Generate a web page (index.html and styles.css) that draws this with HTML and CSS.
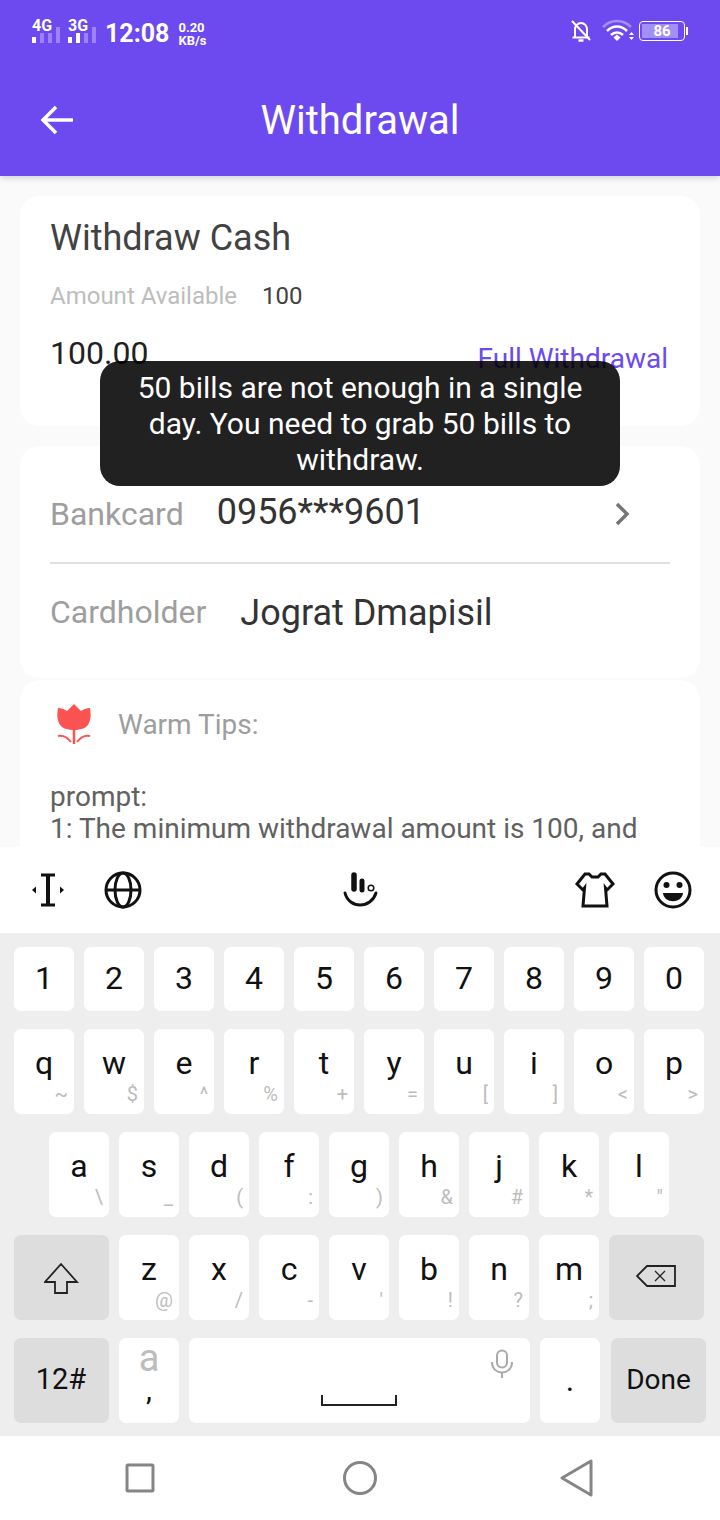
FILE: index.html
```html
<!DOCTYPE html>
<html lang="en">
<head>
  <meta charset="UTF-8">
  <meta name="viewport" content="width=device-width, initial-scale=1.0">
  <title>Withdrawal</title>
  <link rel="stylesheet" href="styles.css">
</head>
<body>
  <div class="screen">
    <header class="header">
      <div class="status-bar">
        <div class="status-left">
          <div class="signal">
            <span class="signal-label">4G</span>
            <div class="bars"><i class="on"></i><i></i><i></i><i></i></div>
          </div>
          <div class="signal">
            <span class="signal-label">3G</span>
            <div class="bars"><i class="on"></i><i class="on"></i><i></i><i></i></div>
          </div>
          <span class="clock">12:08</span>
          <div class="speed"><span>0.20</span><span>KB/s</span></div>
        </div>
        <div class="status-right">
          <svg class="icon-bell" width="22" height="24" viewBox="0 0 22 24" fill="none" stroke="#fff" stroke-width="2">
            <path d="M5 18V10.500C5 7 7.500 4 11 4C14.500 4 17 7 17 10.500V18"/>
            <path d="M2.500 18.500H19.500"/>
            <path d="M2 2L20 21"/>
            <path d="M8.500 21.500H13.500" stroke-width="2.500"/>
          </svg>
          <svg class="icon-wifi" width="36" height="24" viewBox="0 0 36 24" fill="none">
            <path d="M2 8C10 0 22 0 30 8" stroke="#a48ff6" stroke-width="2.500"/>
            <path d="M6 12C12 6 20 6 26 12" stroke="#fff" stroke-width="2.500"/>
            <path d="M10 16C13.500 12.500 18.500 12.500 22 16" stroke="#fff" stroke-width="2.500"/>
            <path d="M12.500 18.500L16 15.500L19.500 18.500L16 22Z" fill="#fff"/>
            <path d="M28 16L30.500 13L33 16ZM28 18H33L30.500 21Z" fill="#fff"/>
          </svg>
          <div class="battery">
            <div class="battery-body">
              <div class="battery-fill"></div>
              <span class="battery-level">86</span>
            </div>
            <div class="battery-tip"></div>
          </div>
        </div>
      </div>
      <div class="app-bar">
        <svg class="back" width="36" height="32" viewBox="0 0 36 32" fill="none" stroke="#fff" stroke-width="3.500">
          <path d="M34 16H4"/>
          <path d="M17 3L4 16L17 29"/>
        </svg>
        <h1>Withdrawal</h1>
      </div>
    </header>

    <main class="content">
      <section class="card card-cash">
        <h2>Withdraw Cash</h2>
        <div class="available">
          <span class="available-label">Amount Available</span>
          <span>100</span>
        </div>
        <div class="amount-row">
          <span class="amount">100.00</span>
          <span class="full-link">Full Withdrawal</span>
        </div>
      </section>

      <section class="card card-bank">
        <div class="bank-row bank-row-line">
          <span class="bank-label">Bankcard</span>
          <span class="bank-value">0956***9601</span>
          <svg class="chevron" width="16" height="24" viewBox="0 0 16 24" fill="none" stroke="#757575" stroke-width="3.500">
            <path d="M3 2L13 12L3 22"/>
          </svg>
        </div>
        <div class="bank-row">
          <span class="bank-label holder-label">Cardholder</span>
          <span class="bank-value holder">Jograt Dmapisil</span>
        </div>
      </section>

      <section class="card card-tips">
        <div class="tips-title">
          <svg width="36" height="42" viewBox="0 0 36 42" fill="none">
            <path d="M18 1L25 8C28 6 31 5 34 5C35 12 35 15 33 20C31 25 25 27 18 27C11 27 5 25 3 20C1 15 1 12 2 5C5 5 8 6 11 8Z" fill="#fb5252"/>
            <path d="M18 27V41" stroke="#fb5252" stroke-width="2.500"/>
            <path d="M2 33C7 32 12 35 15 39M34 33C29 32 24 35 21 39" stroke="#fb5252" stroke-width="2"/>
          </svg>
          <span>Warm Tips:</span>
        </div>
        <p>prompt:<br>1: The minimum withdrawal amount is 100, and</p>
      </section>

      <div class="toast">50 bills are not enough in a single day. You need to grab 50 bills to withdraw.</div>
    </main>

    <div class="kb-toolbar">
      <div class="kb-tools">
        <svg width="36" height="36" viewBox="0 0 36 36" fill="none" stroke="#111" stroke-width="3">
          <path d="M11 3H25M11 33H25" stroke-width="3"/>
          <path d="M18 3V33" stroke-width="4"/>
          <path d="M2 18L6 14.500V21.500ZM34 18L30 14.500V21.500Z" fill="#111" stroke="none"/>
        </svg>
        <svg width="38" height="38" viewBox="0 0 38 38" fill="none" stroke="#111" stroke-width="3">
          <circle cx="19" cy="19" r="17"/>
          <ellipse cx="19" cy="19" rx="8" ry="17"/>
          <path d="M2 19H36"/>
        </svg>
      </div>
      <svg class="kb-logo" width="36" height="36" viewBox="0 0 36 36" fill="none">
        <path d="M11 3V17" stroke="#111" stroke-width="5.500" stroke-linecap="round"/>
        <path d="M19 9V18" stroke="#111" stroke-width="5" stroke-linecap="round"/>
        <circle cx="28" cy="16" r="2.800" stroke="#111" stroke-width="1.500"/>
        <path d="M2 21C6 37 28 37 33 21" stroke="#111" stroke-width="3" stroke-linecap="round"/>
      </svg>
      <div class="kb-tools">
        <svg width="42" height="36" viewBox="0 0 42 36" fill="none" stroke="#111" stroke-width="3" stroke-linejoin="miter">
          <path d="M15 2L18 5H24L27 2H31L39 12L33 18L31.500 16L33 34H9L10.500 16L9 18L3 12L11 2Z"/>
        </svg>
        <svg width="38" height="38" viewBox="0 0 38 38" fill="none">
          <circle cx="19" cy="19" r="17" stroke="#111" stroke-width="3"/>
          <circle cx="12.500" cy="14" r="3" fill="#111"/>
          <circle cx="25.500" cy="14" r="3" fill="#111"/>
          <path d="M9 22H29C28 33 10 33 9 22Z" fill="#111"/>
        </svg>
      </div>
    </div>

    <div class="keyboard">
      <div class="kb-row row-num">
        <div class="key">1</div><div class="key">2</div><div class="key">3</div><div class="key">4</div><div class="key">5</div>
        <div class="key">6</div><div class="key">7</div><div class="key">8</div><div class="key">9</div><div class="key">0</div>
      </div>
      <div class="kb-row">
        <div class="key">q<small>~</small></div><div class="key">w<small>$</small></div><div class="key">e<small>^</small></div>
        <div class="key">r<small>%</small></div><div class="key">t<small>+</small></div><div class="key">y<small>=</small></div>
        <div class="key">u<small>[</small></div><div class="key">i<small>]</small></div><div class="key">o<small>&lt;</small></div>
        <div class="key">p<small>&gt;</small></div>
      </div>
      <div class="kb-row row-home">
        <div class="key">a<small>\</small></div><div class="key">s<small>_</small></div><div class="key">d<small>(</small></div>
        <div class="key">f<small>:</small></div><div class="key">g<small>)</small></div><div class="key">h<small>&amp;</small></div>
        <div class="key">j<small>#</small></div><div class="key">k<small>*</small></div><div class="key">l<small>"</small></div>
      </div>
      <div class="kb-row">
        <div class="key key-fn">
          <svg width="36" height="32" viewBox="0 0 36 32" fill="none" stroke="#222" stroke-width="1.800">
            <path d="M17 2L33 20H23V31H11V20H1Z"/>
          </svg>
        </div>
        <div class="key">z<small>@</small></div><div class="key">x<small>/</small></div><div class="key">c<small>-</small></div>
        <div class="key">v<small>'</small></div><div class="key">b<small>!</small></div><div class="key">n<small>?</small></div>
        <div class="key">m<small>;</small></div>
        <div class="key key-fn key-delete">
          <svg width="42" height="24" viewBox="0 0 42 24" fill="none" stroke="#222" stroke-width="1.800">
            <path d="M11 2H39V22H11L1 12Z"/>
            <path d="M19 7L29 17M29 7L19 17" stroke-width="1.300"/>
          </svg>
        </div>
      </div>
      <div class="kb-row">
        <div class="key key-fn key-label key-symbols">12#</div>
        <div class="key key-comma"><span>a</span><b>,</b></div>
        <div class="key key-space">
          <svg class="mic" width="22" height="30" viewBox="0 0 22 30" fill="none" stroke="#aaa" stroke-width="2">
            <rect x="6" y="1.500" width="10" height="17" rx="5"/>
            <path d="M1 13C1 27 21 27 21 13M11 23V29"/>
          </svg>
          <svg class="space-bar" width="76" height="11" viewBox="0 0 76 11" fill="none" stroke="#222" stroke-width="2">
            <path d="M1 0V10H75V0"/>
          </svg>
        </div>
        <div class="key key-dot">.</div>
        <div class="key key-fn key-label key-done">Done</div>
      </div>
    </div>

    <nav class="nav-bar">
      <svg width="30" height="30" viewBox="0 0 30 30" fill="none" stroke="#858585" stroke-width="3" stroke-linejoin="round">
        <rect x="2" y="2" width="26" height="26" rx="1"/>
      </svg>
      <svg class="nav-home" width="36" height="36" viewBox="0 0 36 36" fill="none" stroke="#858585" stroke-width="3">
        <circle cx="18" cy="18" r="15.500"/>
      </svg>
      <svg width="34" height="38" viewBox="0 0 34 38" fill="none" stroke="#858585" stroke-width="3" stroke-linejoin="round">
        <path d="M31 2V36L2 19Z"/>
      </svg>
    </nav>
  </div>
</body>
</html>
```

FILE: styles.css
```css
* {
  box-sizing: border-box;
}
body {
  margin: 0;
  font-family: Roboto, "Noto Sans", sans-serif;
  background-color: #fafafa;
}
.screen {
  width: 720px;
  height: 1520px;
  display: flex;
  flex-direction: column;
  overflow: hidden;
}

/* header */
.header {
  height: 176px;
  flex-shrink: 0;
  background-color: #6c4af0;
  color: white;
  box-shadow: 0 2px 6px rgba(0, 0, 0, 0.16);
  position: relative;
  z-index: 1;
}
.status-bar {
  height: 64px;
  padding: 14px 32px 0 32px;
  display: flex;
  justify-content: space-between;
  align-items: flex-start;
}
.status-left, .status-right {
  display: flex;
  align-items: center;
}
.status-right {
  margin-top: 5px;
}
.signal {
  width: 36px;
  align-self: flex-start;
  display: flex;
  flex-direction: column;
}
.signal-label {
  font-size: 16px;
  font-weight: 700;
  line-height: 15px;
  margin-top: 4px;
}
.bars {
  display: flex;
  gap: 4px;
  margin-top: -6px;
  height: 16px;
  align-items: flex-end;
}
.bars i {
  width: 4px;
  height: 16px;
  background-color: #9a83f6;
}
.bars i:nth-child(1) {
  height: 6px;
}
.bars i:nth-child(2), .bars i:nth-child(3) {
  height: 10px;
}
.bars i.on {
  background-color: white;
}
.clock {
  font-size: 25px;
  font-weight: 700;
  margin-left: 1px;
  margin-top: 1px;
  line-height: 38px;
}
.speed {
  margin-left: 9px;
  display: flex;
  flex-direction: column;
  font-size: 13px;
  font-weight: 700;
  line-height: 13px;
}
.icon-wifi {
  margin-left: 9px;
}
.battery {
  margin-left: 2px;
  display: flex;
  align-items: center;
}
.battery-body {
  width: 46px;
  height: 20px;
  border: 1px solid white;
  border-radius: 4px;
  padding: 2px;
  position: relative;
}
.battery-fill {
  width: 36px;
  height: 14px;
  background-color: #a48ff6;
}
.battery-level {
  position: absolute;
  left: 0;
  right: 0;
  top: 0;
  text-align: center;
  font-size: 15px;
  font-weight: 700;
  line-height: 18px;
}
.battery-tip {
  width: 2px;
  height: 8px;
  background-color: white;
  margin-left: 1px;
}
.app-bar {
  height: 112px;
  padding-left: 39px;
  display: flex;
  align-items: center;
  position: relative;
}
.app-bar h1 {
  position: absolute;
  left: 0;
  right: 0;
  margin: 0;
  text-align: center;
  font-size: 40px;
  font-weight: 400;
}

/* page */
.content {
  flex: 1;
  min-height: 0;
  padding: 20px 20px 0 20px;
  position: relative;
  overflow: hidden;
}
.card {
  background-color: white;
  border-radius: 20px;
  padding: 0 30px;
}
.card-cash {
  height: 230px;
  margin-bottom: 20px;
}
.card-cash h2 {
  margin: 0;
  padding-top: 21px;
  font-size: 36px;
  line-height: 42px;
  font-weight: 400;
  color: #424242;
}
.available {
  margin-top: 23px;
  display: flex;
  gap: 25px;
  font-size: 24px;
  line-height: 28px;
  color: #424242;
}
.available-label {
  color: #bdbdbd;
}
.amount-row {
  margin-top: 24px;
  display: flex;
  justify-content: space-between;
  align-items: flex-end;
  padding-right: 2px;
}
.amount {
  font-size: 32px;
  line-height: 38px;
  color: #212121;
}
.full-link {
  font-size: 28px;
  line-height: 32px;
  margin-bottom: -3px;
  color: #6c4af0;
}
.card-bank {
  height: 232px;
  margin-bottom: 2px;
  padding-top: 39px;
}
.bank-row {
  display: flex;
  align-items: center;
  height: 55px;
}
.bank-row-line {
  height: 79px;
  padding-bottom: 21px;
  border-bottom: 2px solid #e0e0e0;
  margin-bottom: 20px;
}
.bank-label {
  padding-top: 2px;
  font-size: 32px;
  color: #9e9e9e;
}
.holder-label {
  padding-top: 0;
}
.bank-value {
  margin-left: 33px;
  margin-bottom: 2px;
  font-size: 36px;
  color: #333;
  flex: 1;
}
.bank-value.holder {
  margin-left: 34px;
  margin-top: 2px;
  margin-bottom: 0;
}
.chevron {
  margin-right: 40px;
  margin-top: 2px;
}
.card-tips {
  height: 300px;
  padding-top: 23px;
}
.tips-title {
  display: flex;
  align-items: center;
  gap: 26px;
  padding-left: 6px;
  font-size: 28px;
  color: #9e9e9e;
}
.card-tips p {
  margin: 36px 0 0 0;
  font-size: 28px;
  line-height: 32px;
  color: #616161;
}
.toast {
  position: absolute;
  left: 100px;
  top: 185px;
  width: 520px;
  padding: 9px 16px 8px 16px;
  border-radius: 20px;
  background-color: rgba(0, 0, 0, 0.87);
  color: white;
  font-size: 30px;
  line-height: 36px;
  text-align: center;
}

/* keyboard */
.kb-toolbar {
  height: 86px;
  flex-shrink: 0;
  background-color: white;
  padding: 0 28px 0 30px;
  display: flex;
  align-items: center;
  justify-content: space-between;
}
.kb-tools {
  display: flex;
  align-items: center;
  gap: 38px;
}
.kb-logo {
  margin-left: 6px;
}
.keyboard {
  height: 503px;
  flex-shrink: 0;
  background-color: #eeeeee;
  padding-top: 14px;
}
.kb-row {
  display: flex;
  gap: 10px;
  padding-left: 14px;
  height: 85px;
  margin-bottom: 18px;
}
.row-num {
  height: 64px;
}
.row-home {
  padding-left: 49px;
}
.key {
  width: 60px;
  background-color: white;
  border-radius: 7px;
  display: flex;
  justify-content: center;
  padding-top: 16px;
  font-size: 32px;
  line-height: 36px;
  color: #111;
  position: relative;
}
.row-num .key {
  padding-top: 13px;
}
.key small {
  position: absolute;
  right: 6px;
  bottom: 8px;
  font-size: 20px;
  line-height: 24px;
  color: #bdbdbd;
}
.key-fn {
  width: 95px;
  background-color: #dddddd;
  align-items: center;
  padding-top: 0;
}
.key-delete {
  padding-bottom: 4px;
}
.key-label {
  font-size: 28px;
  color: #111;
}
.key-symbols {
  font-size: 29px;
  padding-bottom: 3px;
  padding-right: 1px;
}
.key-done {
  margin-left: 1px;
  padding-bottom: 1px;
}
.key-dot {
  padding-top: 24px;
}
.key-comma {
  flex-direction: column;
  align-items: center;
  justify-content: flex-start;
  padding-top: 0;
}
.key-comma span {
  font-size: 38px;
  line-height: 40px;
  color: #bdbdbd;
}
.key-comma b {
  font-weight: 400;
  font-size: 30px;
  line-height: 24px;
}
.key-space {
  width: 341px;
}
.mic {
  position: absolute;
  right: 17px;
  top: 11px;
}
.space-bar {
  position: absolute;
  left: 132px;
  bottom: 17px;
}
.nav-bar {
  height: 84px;
  flex-shrink: 0;
  background-color: white;
  display: flex;
  align-items: center;
  justify-content: space-between;
  padding: 0 126px 0 125px;
}
.nav-home {
  margin-left: 4px;
}
```
